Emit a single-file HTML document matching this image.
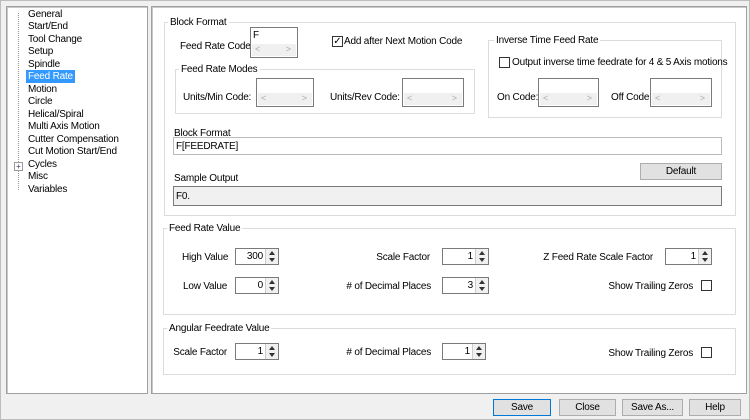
<!DOCTYPE html>
<html><head><style>
*{margin:0;padding:0;box-sizing:border-box}
body{width:750px;height:420px;background:#f0f0f0;font-family:"Liberation Sans",sans-serif;font-size:10px;color:#000;position:relative;overflow:hidden;border:1px solid #bdbdbd}
div,span{position:absolute}
.t{white-space:nowrap;letter-spacing:-0.2px;line-height:13px}
.panel{background:#fff;border:1px solid #a0a0a0;box-shadow:inset 1px 1px 0 #c8c8c8}
.grp{border:1px solid #dcdcdc}
.lg{background:#fff;padding:0 2px;top:-7px}
.box{background:#fff;border:1px solid #7a7a7a}
.sb{background:#f0f0f0;left:1px;right:1px;bottom:1px;height:12px;color:#aaa;font-size:9px}
.inp{background:#fff;border:1px solid #7a7a7a;height:17px;text-align:right;padding-right:14px}
.spin{right:0;top:0;width:13px;height:15px;border-left:1px solid #ccc;background:#f0f0f0}
.spin:before{content:"";position:absolute;left:3px;top:2px;border:3px solid transparent;border-bottom:4px solid #333;border-top:0}
.spin:after{content:"";position:absolute;left:3px;top:9px;border:3px solid transparent;border-top:4px solid #333;border-bottom:0}
.cb{width:11px;height:11px;border:1px solid #333;background:#fff}
.btn{background:#e1e1e1;border:1px solid #adadad;text-align:center;line-height:14px}
</style></head><body>
<div class="panel" style="left:5px;top:5px;width:142px;height:388px">
<div style="left:11px;top:6px;height:177px;border-left:1px dotted #999"></div>
<span class="t" style="top:1px;left:21px">General</span>
<span class="t" style="top:13px;left:21px">Start/End</span>
<span class="t" style="top:26px;left:21px">Tool Change</span>
<span class="t" style="top:38px;left:21px">Setup</span>
<span class="t" style="top:51px;left:21px">Spindle</span>
<span class="t" style="top:63px;left:19px;background:#3399ff;color:#fff;padding:0 2px">Feed Rate</span>
<span class="t" style="top:76px;left:21px">Motion</span>
<span class="t" style="top:88px;left:21px">Circle</span>
<span class="t" style="top:101px;left:21px">Helical/Spiral</span>
<span class="t" style="top:113px;left:21px">Multi Axis Motion</span>
<span class="t" style="top:126px;left:21px">Cutter Compensation</span>
<span class="t" style="top:138px;left:21px">Cut Motion Start/End</span>
<div style="left:7px;top:155px;width:9px;height:9px;border:1px solid #999;background:#fff;font-size:8px;line-height:7px;text-align:center;color:#336">+</div>
<span class="t" style="top:151px;left:21px">Cycles</span>
<span class="t" style="top:163px;left:21px">Misc</span>
<span class="t" style="top:176px;left:21px">Variables</span>
</div>
<div class="panel" style="left:150px;top:5px;width:596px;height:388px">
<div class="grp" style="left:12px;top:15px;width:572px;height:194px"><span class="t lg" style="left:3px">Block Format</span></div>
<span class="t" style="left:28px;top:33px">Feed Rate Code</span>
<div class="box" style="left:98px;top:20px;width:48px;height:31px"><span class="t" style="left:2px;top:1px">F</span><div class="sb"><span style="left:3px">&lt;</span><span style="right:5px">&gt;</span></div></div>
<div class="cb" style="left:180px;top:29px;font-size:10px;line-height:9px;text-align:center">✓</div>
<span class="t" style="left:192px;top:28px">Add after Next Motion Code</span>
<div class="grp" style="left:23px;top:62px;width:300px;height:45px"><span class="t lg" style="left:3px">Feed Rate Modes</span></div>
<span class="t" style="left:31px;top:84px">Units/Min Code:</span>
<div class="box" style="left:104px;top:71px;width:58px;height:29px"><div class="sb"><span style="left:3px">&lt;</span><span style="right:5px">&gt;</span></div></div>
<span class="t" style="left:178px;top:84px">Units/Rev Code:</span>
<div class="box" style="left:250px;top:71px;width:62px;height:29px"><div class="sb"><span style="left:3px">&lt;</span><span style="right:5px">&gt;</span></div></div>
<div class="grp" style="left:336px;top:33px;width:234px;height:78px"><span class="t lg" style="left:5px">Inverse Time Feed Rate</span></div>
<div class="cb" style="left:347px;top:50px"></div>
<span class="t" style="left:360px;top:49px">Output inverse time feedrate for 4 &amp; 5 Axis motions</span>
<span class="t" style="left:345px;top:84px">On Code:</span>
<div class="box" style="left:386px;top:71px;width:61px;height:29px"><div class="sb"><span style="left:3px">&lt;</span><span style="right:5px">&gt;</span></div></div>
<span class="t" style="left:459px;top:84px">Off Code:</span>
<div class="box" style="left:498px;top:71px;width:62px;height:29px"><div class="sb"><span style="left:3px">&lt;</span><span style="right:5px">&gt;</span></div></div>
<span class="t" style="left:22px;top:120px">Block Format</span>
<div style="left:21px;top:130px;width:549px;height:18px;border:1px solid #bbb;background:#fff"><span class="t" style="left:2px;top:2px">F[FEEDRATE]</span></div>
<div class="btn" style="left:488px;top:156px;width:82px;height:17px"><span class="t" style="left:0;right:0;top:1px">Default</span></div>
<span class="t" style="left:22px;top:165px">Sample Output</span>
<div style="left:21px;top:179px;width:549px;height:20px;border:1px solid #7a7a7a;background:#f0f0f0"><span class="t" style="left:2px;top:3px">F0.</span></div>

<div class="grp" style="left:11px;top:221px;width:573px;height:87px"><span class="t lg" style="left:3px">Feed Rate Value</span></div>
<span class="t" style="left:30px;top:244px">High Value</span>
<div class="inp" style="left:83px;top:241px;width:44px"><span class="t" style="right:15px;top:1px">300</span><div class="spin"></div></div>
<span class="t" style="right:316px;top:244px">Scale Factor</span>
<div class="inp" style="left:290px;top:241px;width:47px"><span class="t" style="right:15px;top:1px">1</span><div class="spin"></div></div>
<span class="t" style="right:93px;top:244px">Z Feed Rate Scale Factor</span>
<div class="inp" style="left:513px;top:241px;width:47px"><span class="t" style="right:15px;top:1px">1</span><div class="spin"></div></div>
<span class="t" style="left:31px;top:273px">Low Value</span>
<div class="inp" style="left:83px;top:270px;width:44px"><span class="t" style="right:15px;top:1px">0</span><div class="spin"></div></div>
<span class="t" style="right:315px;top:273px"># of Decimal Places</span>
<div class="inp" style="left:290px;top:270px;width:47px"><span class="t" style="right:15px;top:1px">3</span><div class="spin"></div></div>
<span class="t" style="right:53px;top:273px">Show Trailing Zeros</span>
<div class="cb" style="left:549px;top:273px"></div>

<div class="grp" style="left:11px;top:321px;width:573px;height:47px"><span class="t lg" style="left:3px">Angular Feedrate Value</span></div>
<span class="t" style="right:519px;top:339px">Scale Factor</span>
<div class="inp" style="left:83px;top:336px;width:44px"><span class="t" style="right:15px;top:1px">1</span><div class="spin"></div></div>
<span class="t" style="right:315px;top:339px"># of Decimal Places</span>
<div class="inp" style="left:290px;top:336px;width:44px"><span class="t" style="right:15px;top:1px">1</span><div class="spin"></div></div>
<span class="t" style="right:53px;top:340px">Show Trailing Zeros</span>
<div class="cb" style="left:549px;top:340px"></div>
</div>
<div class="btn" style="left:492px;top:398px;width:58px;height:17px;border:1px solid #0078d7"><span class="t" style="left:0;right:0;top:1px">Save</span></div>
<div class="btn" style="left:558px;top:398px;width:57px;height:17px"><span class="t" style="left:0;right:0;top:1px">Close</span></div>
<div class="btn" style="left:621px;top:398px;width:61px;height:17px"><span class="t" style="left:0;right:0;top:1px">Save As...</span></div>
<div class="btn" style="left:688px;top:398px;width:52px;height:17px"><span class="t" style="left:0;right:0;top:1px">Help</span></div>
</body></html>
